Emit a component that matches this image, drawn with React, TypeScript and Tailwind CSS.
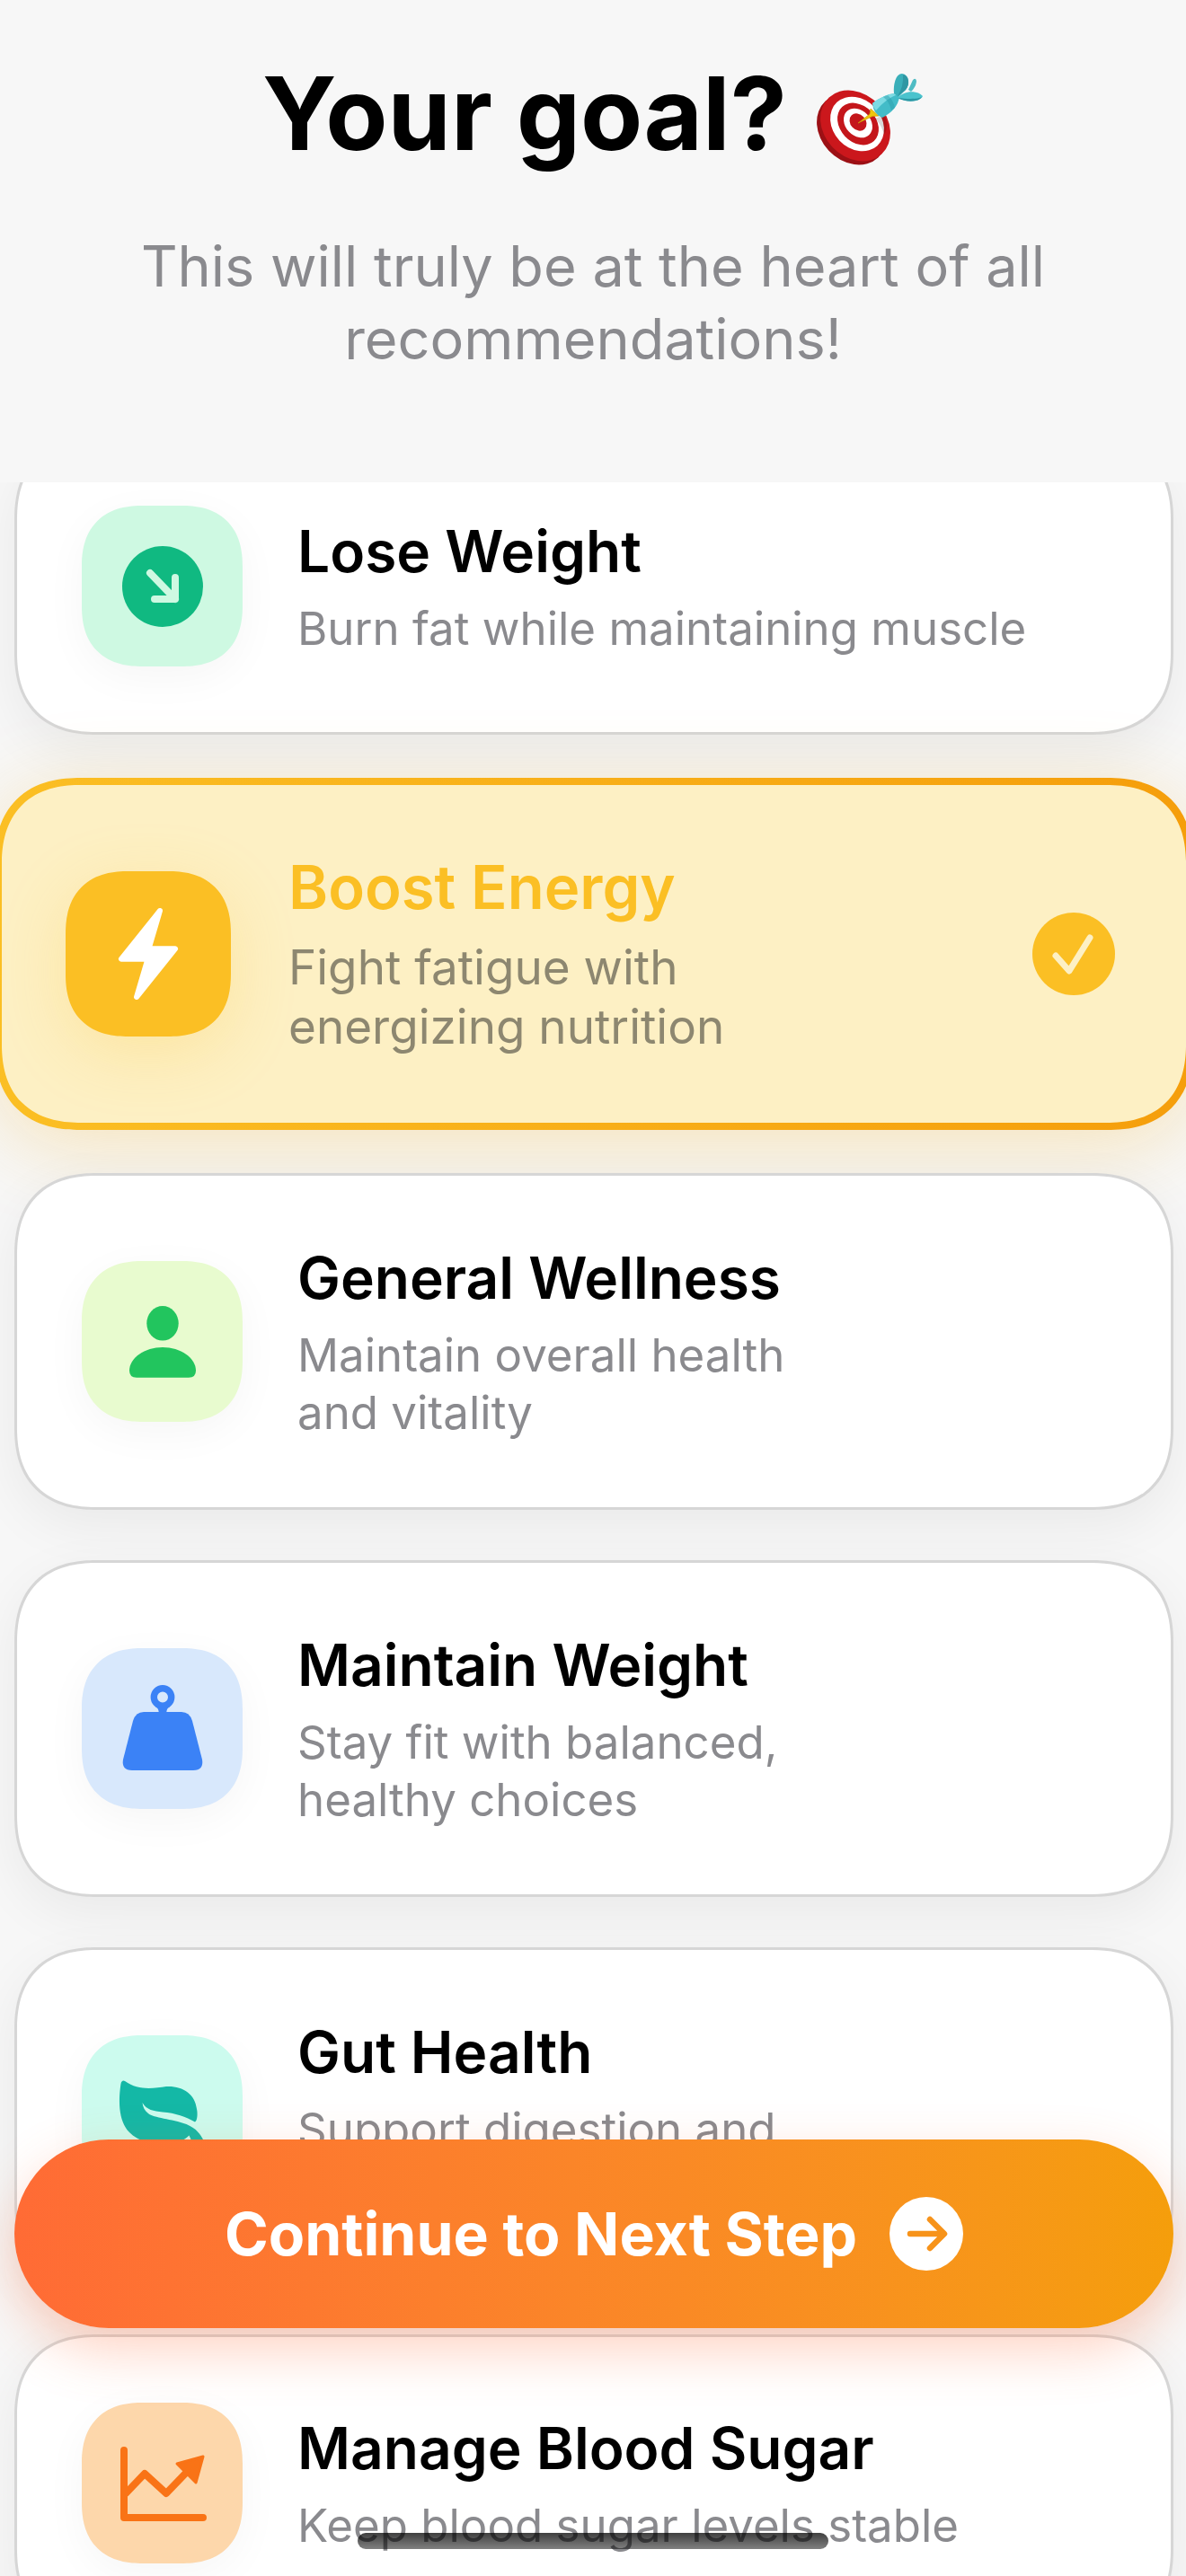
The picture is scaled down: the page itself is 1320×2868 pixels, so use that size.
import React, { useState } from 'react';

type Goal = {
  id: string;
  title: string;
  description: string;
  tile: string;
  icon: React.ReactNode;
};

const goals: Goal[] = [
  {
    id: 'lose-weight',
    title: 'Lose Weight',
    description: 'Burn fat while maintaining muscle',
    tile: 'bg-[#cef9e2]',
    icon: (
      <>
        <circle r="45" fill="#10b981" />
        <path d="M-14 -15L14 14M14 -10V14H-9" fill="none" stroke="#cef9e2" strokeWidth="8" strokeLinecap="round" strokeLinejoin="round" />
      </>
    ),
  },
  {
    id: 'boost-energy',
    title: 'Boost Energy',
    description: 'Fight fatigue with\nenergizing nutrition',
    tile: 'bg-[#fbbf24]',
    icon: (
      <path
        d="M13 -48L-30 5.7H-0.5L-13 48L30 -5.7H0.5Z"
        fill="#fff"
        stroke="#fff"
        strokeWidth="6"
        strokeLinejoin="round"
      />
    ),
  },
  {
    id: 'general-wellness',
    title: 'General Wellness',
    description: 'Maintain overall health\nand vitality',
    tile: 'bg-[#e8fbcf]',
    icon: (
      <g fill="#22c55e">
        <ellipse cy="-20.7" rx="17.7" ry="19.3" />
        <path d="M-37 32C-37 18 -20 6 0 6S37 18 37 32Q37 39.7 29 39.7H-29Q-37 39.7 -37 32Z" />
      </g>
    ),
  },
  {
    id: 'maintain-weight',
    title: 'Maintain Weight',
    description: 'Stay fit with balanced,\nhealthy choices',
    tile: 'bg-[#d8e8fc]',
    icon: (
      <g fill="#3b82f6">
        <circle cy="-35.5" r="9.7" fill="none" stroke="#3b82f6" strokeWidth="7.4" />
        <path d="M-8 -25Q-4 -23 -4.2 -17H4.2Q4 -23 8 -25Z" />
        <path d="M-21 -19H21Q30 -19 33 -9L44 34Q46 46 34 46H-34Q-46 46 -44 34L-33 -9Q-30 -19 -21 -19Z" />
      </g>
    ),
  },
  {
    id: 'gut-health',
    title: 'Gut Health',
    description: 'Support digestion and\n\n',
    tile: 'bg-[#ccfbee]',
    icon: (
      <path
        d="M-42 -39C-44 -40.5 -46 -39 -46.5 -36C-49 -20 -50 5 -37 18C-22 33 6 36 20 28C24 26 27 24 29.5 21.5L36 36Q41 42 46 38Q50 35 46 28C42 20 38 14 26.5 9C10 3 -10 2 -16 -3C-20 -6 -22 -10 -22.5 -15C-18 -7 -10 -5.5 0 -4.5C14 -3.5 26 1 36 6.5C39 5 39 -4 38 -8C36 -25 22 -34 4 -33C-10 -31 -27 -28 -42 -39Z"
        fill="#14b8a6"
      />
    ),
  },
  {
    id: 'blood-sugar',
    title: 'Manage Blood Sugar',
    description: 'Keep blood sugar levels stable',
    tile: 'bg-[#fdd7ab]',
    icon: (
      <g stroke="#f97316" strokeLinecap="round" strokeLinejoin="round">
        <path d="M-43 -37V38H45M-41 11L-20 -11L4 11L30 -16" fill="none" strokeWidth="8" />
        <path d="M16 -22L45 -30L37 -1Z" fill="#f97316" strokeWidth="3" />
      </g>
    ),
  },
];

function TargetIcon() {
  return (
    <svg viewBox="0 0 120 104" className="mb-3 h-[104px] w-[120px]" aria-hidden="true">
      {/* board */}
      <ellipse cx="40" cy="62" rx="43" ry="35" transform="rotate(47 40 62)" fill="#9c1015" />
      <ellipse cx="44" cy="58" rx="43" ry="35" transform="rotate(47 44 58)" fill="#cb171c" />
      <ellipse cx="46" cy="56" rx="33" ry="27" transform="rotate(47 46 56)" fill="#fff" />
      <ellipse cx="47" cy="56" rx="26" ry="20" transform="rotate(47 47 56)" fill="#c4161b" />
      <ellipse cx="47" cy="55" rx="18" ry="14" transform="rotate(47 47 55)" fill="#fff" />
      <ellipse cx="47" cy="54" rx="10.5" ry="8.5" transform="rotate(47 47 54)" fill="#c4161b" />
      {/* dart */}
      <path d="M66 50L76 46C80 52 80 62 76 68C74 60 70 54 66 50Z" fill="#000" opacity="0.15" />
      <path d="M47 55L60 45L61 39L70 47L63 47.5Z" fill="#eec60c" stroke="#c99a08" strokeWidth="0.7" />
      <path d="M103 18L108 7Q111 4 112 8Q112 14 106 20Z" fill="#4fbcc4" />
      <path d="M63 33Q76 23 88 22L93 26Q91 40 74 49Q64 45 63 33Z" fill="#43bcc8" />
      <path d="M63 33Q76 23 88 22L90 23.5Q78 28 67 41Q64 38 63 33Z" fill="#7ddbe3" />
      <path d="M75 26Q82 31 84 41L88 38Q86 29 80 24Z" fill="#2b9dab" opacity="0.5" />
      <path d="M87 22C86 12 89 0 96 0C104 1 105 12 100 18L92 26Z" fill="#3aafb9" />
      <path d="M97 1C104 2 105 12 100 18L91 25Q98 14 97 1Z" fill="#2f97a3" />
      <path d="M91 27C98 19 112 18 119 25C116 32 100 32 91 27Z" fill="#4bc3cd" />
      <path d="M91 27C100 28 112 29 118 26C114 32 100 32 91 27Z" fill="#2c98a5" />
    </svg>
  );
}

function GoalCard({ goal, selected, onSelect }: { goal: Goal; selected: boolean; onSelect: () => void }) {
  return (
    <button
      type="button"
      aria-pressed={selected}
      onClick={onSelect}
      className={
        selected
          ? '-mx-[22px] -my-2 flex items-center gap-16 rounded-[96px] [corner-shape:superellipse(1.25)] border-8 border-transparent bg-[linear-gradient(#fdf0c4,#fdf0c4),linear-gradient(90deg,#fbbf24,#f59e0b)] bg-origin-border [background-clip:padding-box,border-box] py-[74px] pr-[79px] pl-[71px] text-left shadow-[0_18px_90px_rgba(245,175,30,0.28)]'
          : 'flex items-center gap-[61px] rounded-[92px] [corner-shape:superellipse(1.25)] border-3 border-[#d6d6d6] bg-white px-[72px] py-[73px] text-left shadow-[0_18px_60px_rgba(0,0,0,0.06)]'
      }
    >
      <span
        className={`flex shrink-0 items-center justify-center [corner-shape:superellipse(1.25)] ${goal.tile} ${
          selected
            ? 'size-[184px] rounded-[70px] shadow-[0_18px_72px_rgba(251,191,36,0.22)]'
            : 'size-[179px] rounded-[68px] shadow-[0_12px_48px_rgba(0,0,0,0.04)]'
        }`}
      >
        <svg viewBox="-60 -60 120 120" className="size-[120px]" aria-hidden="true">
          {goal.icon}
        </svg>
      </span>
      <span className={`flex min-w-0 flex-1 flex-col ${selected ? 'gap-4' : 'gap-3.5'}`}>
        <span className={`font-semibold ${selected ? 'text-[67px] leading-[80px] text-[#fbbf24]' : 'text-[64px] leading-[81px] text-black'}`}>
          {goal.title}
        </span>
        <span
          className={`whitespace-pre-line ${
            selected ? 'text-[53px] leading-[66px] text-[#8d8770]' : 'text-[51px] leading-[64px] text-[#8a8a8e]'
          }`}
        >
          {goal.description}
        </span>
      </span>
      {selected && (
        <svg viewBox="-46 -46 92 92" className="size-[92px] shrink-0" aria-hidden="true">
          <circle r="46" fill="#fbbf24" />
          <path d="M-20 2L-5 19L18 -18" fill="none" stroke="#fdf0c4" strokeWidth="7" strokeLinecap="round" strokeLinejoin="round" />
        </svg>
      )}
    </button>
  );
}

export default function App() {
  const [selectedId, setSelectedId] = useState('boost-energy');

  return (
    <div className="relative flex h-screen flex-col overflow-hidden bg-[#f7f7f7] font-['Inter','Liberation_Sans',sans-serif]">
      <header className="relative z-10 flex flex-col items-center gap-[58px] bg-[#f7f7f7] px-[120px] pt-[54px] pb-[119px] text-center">
        <h1 className="flex items-end gap-8 text-[113px] leading-[144px] font-bold text-black">
          Your goal?
          <TargetIcon />
        </h1>
        <p className="text-[63px] leading-[81px] text-[#8a8a8e]">
          This will truly be at the heart of all recommendations!
        </p>
      </header>

      <main className="min-h-0 flex-1 overflow-hidden pr-3.5 pl-4">
        <div className="-mt-[50px] flex flex-col gap-14">
          {goals.map(goal => (
            <GoalCard
              key={goal.id}
              goal={goal}
              selected={goal.id === selectedId}
              onSelect={() => setSelectedId(goal.id)}
            />
          ))}
        </div>
      </main>

      <div className="absolute right-3.5 bottom-[276px] left-4 z-20">
        <button
          type="button"
          className="flex h-[210px] w-full items-center justify-center gap-9 rounded-full bg-linear-to-r from-[#ff6b35] to-[#f59e0b] text-[66px] font-bold text-white shadow-[0_24px_60px_rgba(255,107,53,0.3)]"
        >
          Continue to Next Step
          <svg viewBox="-41 -41 82 82" className="size-[82px]" aria-hidden="true">
            <circle r="41" fill="#fff" />
            <path d="M-18 0H19M4 -16L20 0L4 16" fill="none" stroke="#f7931a" strokeWidth="6.5" strokeLinecap="round" strokeLinejoin="round" />
          </svg>
        </button>
      </div>

      <div className="absolute bottom-[30px] left-1/2 z-30 h-[18px] w-[524px] -translate-x-1/2 rounded-full bg-linear-to-b from-black/75 to-black/50" />
    </div>
  );
}
